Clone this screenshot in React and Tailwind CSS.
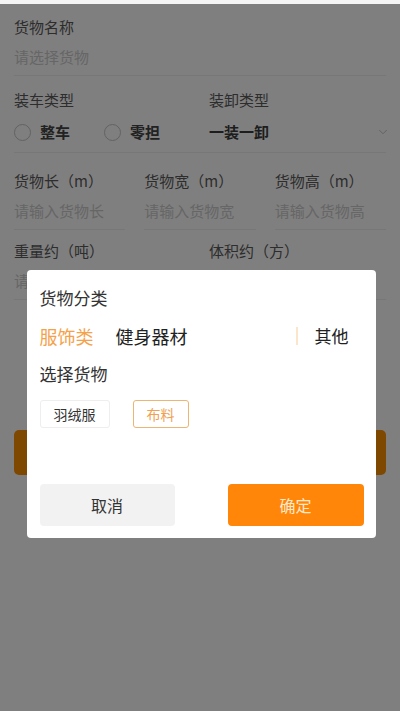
import React, { useState } from "react";
import { ChevronDown } from "lucide-react";

const fields3 = [
  { label: "货物长（m）", placeholder: "请输入货物长" },
  { label: "货物宽（m）", placeholder: "请输入货物宽" },
  { label: "货物高（m）", placeholder: "请输入货物高" },
];

function Field({ label, placeholder, className = "" }) {
  return (
    <div className={`border-b border-[#eeeeee] pb-[8px] ${className}`}>
      <div className="h-[20px] leading-[20px] text-[15px] text-[#5a5a5a]">
        {label}
      </div>
      <div className="mt-[10px] h-[20px] leading-[20px] text-[15px] text-[#cccccc] truncate">
        {placeholder}
      </div>
    </div>
  );
}

function Radio({ label }) {
  return (
    <div className="flex items-center gap-[9px]">
      <div className="w-[17px] h-[17px] rounded-full border border-[#c4c4c4]" />
      <div className="text-[15px] font-bold text-[#444444]">{label}</div>
    </div>
  );
}

function CargoForm() {
  return (
    <div className="px-[14px]">
      <div className="pt-[13px]">
        <Field label="货物名称" placeholder="请选择货物" />
      </div>

      <div className="grid grid-cols-2 gap-x-[18px] pt-[14px] border-b border-[#eeeeee] pb-[10px]">
        <div>
          <div className="h-[20px] leading-[20px] text-[15px] text-[#5a5a5a]">
            装车类型
          </div>
          <div className="mt-[12px] h-[20px] flex items-center gap-[34px]">
            <Radio label="整车" />
            <Radio label="零担" />
          </div>
        </div>
        <div>
          <div className="h-[20px] leading-[20px] text-[15px] text-[#5a5a5a]">
            装卸类型
          </div>
          <div className="mt-[12px] h-[20px] flex items-center justify-between">
            <div className="text-[15px] font-bold text-[#3a3a3a]">一装一卸</div>
            <ChevronDown className="w-[14px] h-[14px] text-[#bbbbbb] -mr-[4px]" strokeWidth={1.5} />
          </div>
        </div>
      </div>

      <div className="grid grid-cols-3 gap-x-[19px] pt-[18px]">
        {fields3.map((f) => (
          <Field key={f.label} label={f.label} placeholder={f.placeholder} />
        ))}
      </div>

      <div className="grid grid-cols-2 gap-x-[18px] pt-[11px]">
        <Field label="重量约（吨）" placeholder="请输入重量" />
        <Field label="体积约（方）" placeholder="请输入体积" />
      </div>

      <div className="mt-[130px] h-[45px] rounded-[5px] bg-[#ff9000] flex items-center justify-center text-white text-[16px]">
        发布货源
      </div>
    </div>
  );
}

function CategoryModal() {
  const [tab, setTab] = useState("服饰类");
  const [item, setItem] = useState("布料");

  return (
    <div className="w-[349px] ml-[2px] bg-white rounded-[4px] pl-[13px] pr-[12px] pt-[17px] pb-[12px]">
      <div className="h-[22px] leading-[22px] text-[17px] text-[#333333]">
        货物分类
      </div>

      <div className="mt-[14px] h-[26px] flex items-center">
        {["服饰类", "健身器材"].map((t) => (
          <button
            key={t}
            onClick={() => setTab(t)}
            className={`mr-[22px] text-[18px] leading-[26px] ${
              tab === t ? "text-[#f5a14a]" : "text-[#222222]"
            }`}
          >
            {t}
          </button>
        ))}
        <div className="ml-auto w-[2px] h-[18px] bg-[#fbe6cc]" />
        <button
          onClick={() => setTab("其他")}
          className={`ml-[17px] mr-[15px] text-[17px] leading-[26px] ${
            tab === "其他" ? "text-[#f5a14a]" : "text-[#222222]"
          }`}
        >
          其他
        </button>
      </div>

      <div className="mt-[14px] h-[22px] leading-[22px] text-[17px] text-[#333333]">
        选择货物
      </div>

      <div className="mt-[15px] flex items-center gap-[23px]">
        {["羽绒服", "布料"].map((c) => (
          <button
            key={c}
            onClick={() => setItem(c)}
            className={`h-[28px] px-[13px] rounded-[3px] border text-[14px] ${
              item === c
                ? "border-[#ebb574] text-[#f0a050]"
                : "border-[#eeeeee] text-[#333333]"
            }`}
          >
            {c}
          </button>
        ))}
      </div>

      <div className="mt-[56px] flex items-center justify-between">
        <button className="w-[135px] h-[42px] rounded-[4px] bg-[#f2f2f2] text-[16px] text-[#333333]">
          取消
        </button>
        <button className="w-[136px] h-[42px] rounded-[4px] bg-[#ff8608] text-[16px] text-[#ffe9cc]">
          确定
        </button>
      </div>
    </div>
  );
}

export default function App() {
  return (
    <div className="relative w-[400px] h-[711px] overflow-hidden bg-white font-['Noto_Sans_CJK_SC','Noto_Sans',sans-serif]">
      <div className="h-[4px] bg-[#f4f4f4]" />
      <CargoForm />
      <div className="absolute inset-x-0 bottom-0 top-[4px] bg-black/50 flex justify-center items-start pt-[266px]">
        <CategoryModal />
      </div>
    </div>
  );
}
